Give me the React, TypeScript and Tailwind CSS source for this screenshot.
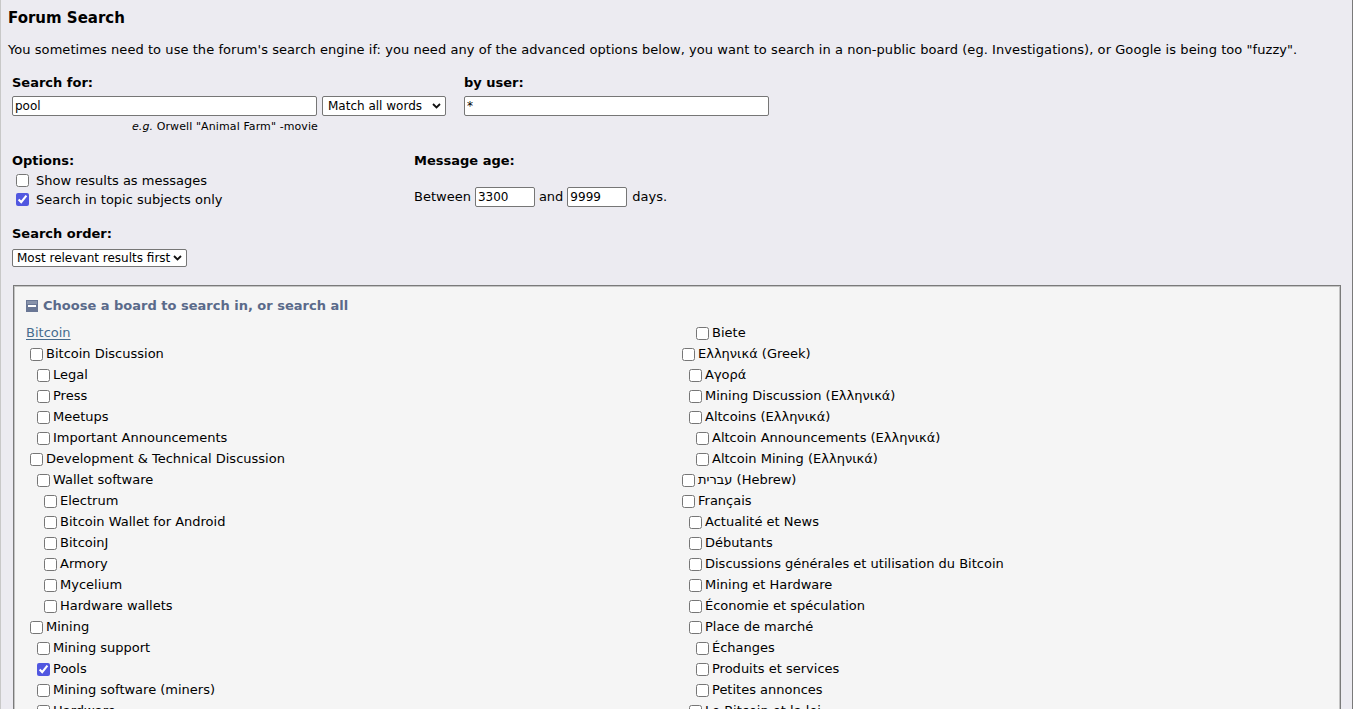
import React from "react";

type Board = { label: string; level: 0 | 1 | 2; checked?: boolean; link?: boolean };

const left: Board[] = [
  { label: "Bitcoin", level: 0, link: true },
  { label: "Bitcoin Discussion", level: 0 },
  { label: "Legal", level: 1 },
  { label: "Press", level: 1 },
  { label: "Meetups", level: 1 },
  { label: "Important Announcements", level: 1 },
  { label: "Development & Technical Discussion", level: 0 },
  { label: "Wallet software", level: 1 },
  { label: "Electrum", level: 2 },
  { label: "Bitcoin Wallet for Android", level: 2 },
  { label: "BitcoinJ", level: 2 },
  { label: "Armory", level: 2 },
  { label: "Mycelium", level: 2 },
  { label: "Hardware wallets", level: 2 },
  { label: "Mining", level: 0 },
  { label: "Mining support", level: 1 },
  { label: "Pools", level: 1, checked: true },
  { label: "Mining software (miners)", level: 1 },
  { label: "Hardware", level: 1 },
];

const right: Board[] = [
  { label: "Biete", level: 2 },
  { label: "Ελληνικά (Greek)", level: 0 },
  { label: "Αγορά", level: 1 },
  { label: "Mining Discussion (Ελληνικά)", level: 1 },
  { label: "Altcoins (Ελληνικά)", level: 1 },
  { label: "Altcoin Announcements (Ελληνικά)", level: 2 },
  { label: "Altcoin Mining (Ελληνικά)", level: 2 },
  { label: "עברית (Hebrew)", level: 0 },
  { label: "Français", level: 0 },
  { label: "Actualité et News", level: 1 },
  { label: "Débutants", level: 1 },
  { label: "Discussions générales et utilisation du Bitcoin", level: 1 },
  { label: "Mining et Hardware", level: 1 },
  { label: "Économie et spéculation", level: 1 },
  { label: "Place de marché", level: 1 },
  { label: "Échanges", level: 2 },
  { label: "Produits et services", level: 2 },
  { label: "Petites annonces", level: 2 },
  { label: "Le Bitcoin et la loi", level: 1 },
];

const indent: Record<number, string> = { 0: "pl-0", 1: "pl-[7px]", 2: "pl-[14px]" };

function Row({ b }: { b: Board }) {
  if (b.link) {
    return (
      <div className="flex h-[21px] items-center">
        <a className="text-[#476c8e] underline decoration-1 underline-offset-2">{b.label}</a>
      </div>
    );
  }
  return (
    <div className={"flex h-[21px] items-center " + indent[b.level]}>
      <input
        type="checkbox"
        defaultChecked={b.checked}
        className="m-0 ml-[4px] mr-[3px] h-[13px] w-[13px] shrink-0 accent-[#5157e0]"
      />
      <span className="whitespace-nowrap">{b.label}</span>
    </div>
  );
}

function Chevron() {
  return (
    <svg width="9" height="6" viewBox="0 0 9 6" className="pointer-events-none absolute right-[5px] top-1/2 -translate-y-1/2">
      <path d="M1 1 L4.5 4.5 L8 1" fill="none" stroke="#111" strokeWidth="1.8" />
    </svg>
  );
}

export default function App() {
  return (
    <div className="h-[709px] w-[1355px] overflow-hidden bg-white font-['DejaVu_Sans',Verdana,sans-serif] text-[13px] text-black">
      <div className="h-full w-[1353px] border-l border-r border-l-[#c8c8c8] border-r-[#7a7a7a] bg-[#ecebf1] pl-[7px]">
        <div className="pt-[8px] text-[15px] font-bold leading-[20px]">Forum Search</div>
        <p className="mt-[12px] leading-[20px] tracking-[0.06px]">
          You sometimes need to use the forum's search engine if: you need any of the advanced options below, you want to search in a non-public board (eg. Investigations), or Google is being too "fuzzy".
        </p>

        <div className="mt-[14px] flex pl-[4px]">
          <div className="w-[452px]">
            <div className="font-bold leading-[18px]">Search for:</div>
            <div className="mt-[4px] flex gap-[5px]">
              <input
                defaultValue="pool"
                className="h-[20px] w-[305px] rounded-[2px] border border-[#767676] bg-white px-[2px] text-[12px] outline-none"
              />
              <div className="relative">
                <select className="h-[20px] w-[124px] appearance-none rounded-[2px] border border-[#767676] bg-white pl-[5px] text-[12px] outline-none">
                  <option>Match all words</option>
                </select>
                <Chevron />
              </div>
            </div>
            <div className="mt-[4px] w-[306px] text-right text-[11px] leading-[14px] tracking-[0.1px]">
              <em>e.g.</em> Orwell "Animal Farm" -movie
            </div>
          </div>
          <div>
            <div className="font-bold leading-[18px]">by user:</div>
            <input
              defaultValue="*"
              className="mt-[4px] h-[20px] w-[305px] rounded-[2px] border border-[#767676] bg-white px-[2px] text-[12px] outline-none"
            />
          </div>
        </div>

        <div className="mt-[18px] flex pl-[4px]">
          <div className="w-[402px]">
            <div className="font-bold leading-[18px]">Options:</div>
            <div className="mt-[1px]">
              <label className="flex h-[19px] items-center">
                <input type="checkbox" className="m-0 ml-[4px] mr-[7px] h-[13px] w-[13px] accent-[#5157e0]" />
                Show results as messages
              </label>
              <label className="flex h-[19px] items-center">
                <input type="checkbox" defaultChecked className="m-0 ml-[4px] mr-[7px] h-[13px] w-[13px] accent-[#5157e0]" />
                Search in topic subjects only
              </label>
            </div>
          </div>
          <div>
            <div className="font-bold leading-[18px]">Message age:</div>
            <div className="mt-[17px] flex items-center">
              <span>Between</span>
              <input
                defaultValue="3300"
                className="ml-[4px] mr-[4px] h-[20px] w-[60px] rounded-[2px] border border-[#767676] bg-white px-[2px] text-[12px] outline-none"
              />
              <span>and</span>
              <input
                defaultValue="9999"
                className="ml-[4px] mr-[5px] h-[20px] w-[60px] rounded-[2px] border border-[#767676] bg-white px-[2px] text-[12px] outline-none"
              />
              <span>days.</span>
            </div>
          </div>
        </div>

        <div className="mt-[16px] pl-[4px]">
          <div className="font-bold leading-[18px]">Search order:</div>
          <div className="relative mt-[5px] w-[175px]">
            <select className="h-[18px] w-[175px] appearance-none rounded-[2px] border border-[#767676] bg-white pl-[4px] text-[12px] leading-[16px] outline-none">
              <option>Most relevant results first</option>
            </select>
            <Chevron />
          </div>
        </div>

        <div className="ml-[5px] mt-[17px] w-[1328px] border border-[#7a7a7a] bg-[#f5f5f5] pl-[12px] pt-[10px] shadow-[inset_0_0_0_1px_#c4c4c4]">
          <div className="flex h-[21px] items-center font-bold text-[#5a6a8a]">
            <svg width="12" height="12" viewBox="0 0 12 12" className="mr-[5px]">
              <rect x="0" y="0" width="12" height="12" fill="#6a7795" />
              <rect x="1" y="1" width="10" height="3" fill="#8893ab" />
              <rect x="2" y="5" width="8" height="2" fill="#ffffff" />
            </svg>
            Choose a board to search in, or search all
          </div>
          <div className="mt-[6px] grid grid-cols-[652px_1fr]">
            <div>
              {left.map((b) => (
                <Row key={b.label} b={b} />
              ))}
            </div>
            <div>
              {right.map((b) => (
                <Row key={b.label} b={b} />
              ))}
            </div>
          </div>
        </div>
      </div>
    </div>
  );
}
